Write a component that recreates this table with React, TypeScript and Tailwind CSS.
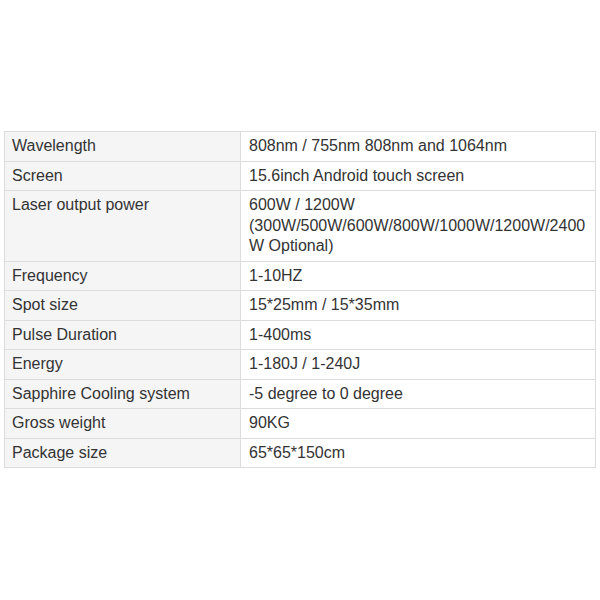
import React from "react";

const rows: [string, string][] = [
  ["Wavelength", "808nm / 755nm 808nm and 1064nm"],
  ["Screen", "15.6inch Android touch screen"],
  [
    "Laser output power",
    "600W / 1200W (300W/500W/600W/800W/1000W/1200W/2400W Optional)",
  ],
  ["Frequency", "1-10HZ"],
  ["Spot size", "15*25mm / 15*35mm"],
  ["Pulse Duration", "1-400ms"],
  ["Energy", "1-180J / 1-240J"],
  ["Sapphire Cooling system", "-5 degree to 0 degree"],
  ["Gross weight", "90KG"],
  ["Package size", "65*65*150cm"],
];

export default function App() {
  return (
    <div className="w-[600px] h-[600px] bg-white pt-[131px] pl-[4px]" style={{ fontFamily: '"Liberation Sans", Arial, sans-serif' }}>
      <table className="w-[592px] border-collapse text-[16px] leading-[20.5px] text-[#333333]">
        <tbody>
          {rows.map(([k, v], i) => (
            <tr key={i}>
              <td className="w-[236px] align-top border border-[#dcdcdc] bg-[#f5f5f6] px-[7px] py-[4px]">{k}</td>
              <td className="align-top border border-[#dcdcdc] bg-white px-[8px] py-[4px] whitespace-nowrap">
                {i === 2 ? (
                  <>
                    600W / 1200W
                    <br />
                    (300W/500W/600W/800W/1000W/1200W/2400
                    <br />W Optional)
                  </>
                ) : (
                  v
                )}
              </td>
            </tr>
          ))}
        </tbody>
      </table>
    </div>
  );
}
